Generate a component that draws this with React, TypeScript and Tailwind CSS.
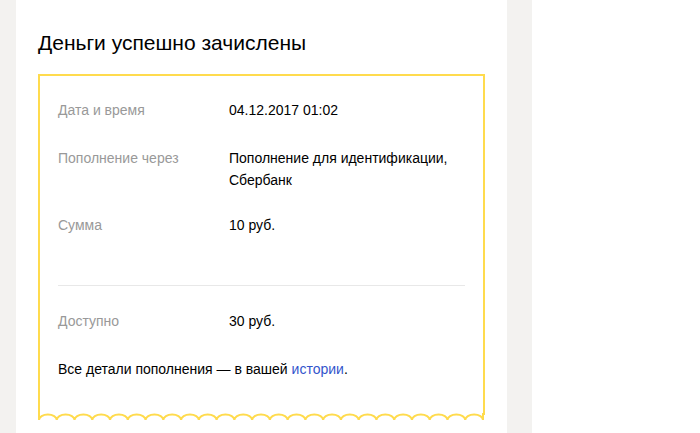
const rows = [
  { label: 'Дата и время', value: '04.12.2017 01:02' },
  { label: 'Пополнение через', value: 'Пополнение для идентификации, Сбербанк' },
  { label: 'Сумма', value: '10 руб.' },
];

function Wave() {
  const count = 25;
  const step = 444 / count;
  let d = 'M1 0 V7';
  for (let i = 0; i < count; i++) {
    d += ` a${(step / 2).toFixed(2)} 5.5 0 0 1 ${step.toFixed(2)} 0`;
  }
  d += ' V0';
  return (
    <svg width="447" height="9" viewBox="0 0 447 9" className="-mt-[2px] block">
      <path d={d} fill="none" stroke="#ffdb4d" strokeWidth="2" />
    </svg>
  );
}

function Row({ label, value }: { label: string; value: string }) {
  return (
    <div className="flex text-[14px] leading-[22px]">
      <div className="w-[171px] shrink-0 text-[#999]">{label}</div>
      <div className="flex-1 text-black">{value}</div>
    </div>
  );
}

export default function App() {
  return (
    <div className="flex h-[433px] w-[700px] bg-white font-['Liberation_Sans',Arial,sans-serif]">
      <div className="w-[16px] bg-[#f3f2f0]" />
      <div className="w-[491px] bg-white px-[22px] pt-[28px]">
        <h1 className="text-[21px] leading-[30px] text-black">Деньги успешно зачислены</h1>

        <div className="mt-[16px] w-[447px]">
          <div className="border-x-2 border-t-2 border-[#ffdb4d] px-[18px] pb-[35px] pt-[23px]">
            <div className="flex flex-col gap-[26px]">
              {rows.slice(0, 2).map((r) => (
                <Row key={r.label} {...r} />
              ))}
            </div>
            <div className="mt-[23px]">
              <Row {...rows[2]} />
            </div>

            <div className="mt-[49px] h-px bg-[#e8e8e8]" />

            <div className="mt-[24px]">
              <Row label="Доступно" value="30 руб." />
            </div>

            <p className="mt-[26px] text-[14px] leading-[22px] text-black">
              Все детали пополнения — в вашей{' '}
              <a href="#" className="text-[#3355cc]">
                истории
              </a>
              .
            </p>
          </div>
          <Wave />
        </div>
      </div>
      <div className="w-[25px] bg-[#f3f2f0]" />
      <div className="flex-1 bg-white" />
    </div>
  );
}
